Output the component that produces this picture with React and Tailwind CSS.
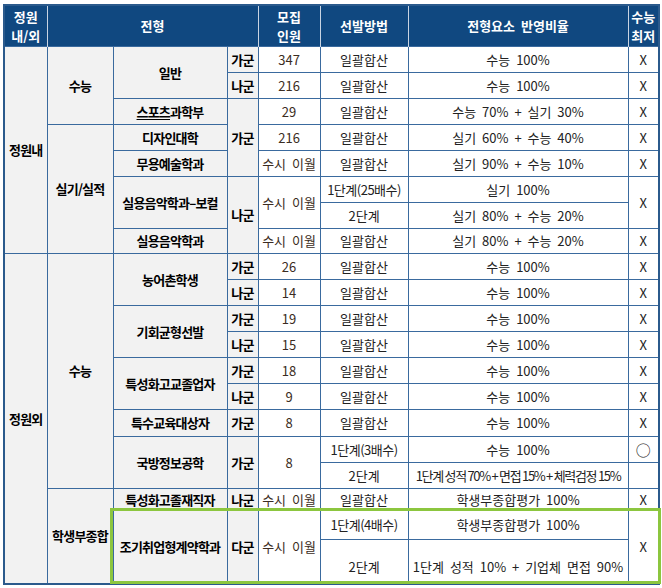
import React from "react";

const B = "border border-[#3a6a9e]";
const G = `${B} bg-[#f2f2f2] font-bold text-black tracking-[-0.8px]`;
const W = `${B} bg-white text-[#222]`;
const N = `${B} bg-white text-[#3b2c22]`;

function H({ children, ...p }) {
  return (
    <th
      {...p}
      className="border-x border-[#c9d4e2] bg-[#104880] text-white font-bold text-[13px] leading-[19px] text-center align-middle first:border-l-0 last:border-r-0"
    >
      {children}
    </th>
  );
}

function C({ cls, children, ...p }) {
  return (
    <td {...p} className={`${cls} text-center align-middle p-0 whitespace-nowrap`}>
      {children}
    </td>
  );
}

const sp = "[word-spacing:3px]";

export default function App() {
  return (
    <div className="w-[662px] h-[588px] bg-white pl-[3px] pt-[4px]" style={{ fontFamily: '"Noto Sans CJK KR", "Noto Sans", sans-serif' }}>
      <div className="relative w-[655px]">
        <table className="table-fixed border-collapse w-[655px] text-[13px] leading-none border-2 border-[#2b5a8c]">
          <colgroup>
            <col className="w-[43px]" />
            <col className="w-[66px]" />
            <col className="w-[114px]" />
            <col className="w-[31px]" />
            <col className="w-[62px]" />
            <col className="w-[88px]" />
            <col className="w-[220px]" />
            <col className="w-[31px]" />
          </colgroup>
          <thead>
            <tr className="h-[41px]">
              <H>정원<br />내/외</H>
              <H colSpan={3}>전형</H>
              <H>모집<br />인원</H>
              <H>선발방법</H>
              <H><span className={sp}>전형요소 반영비율</span></H>
              <H>수능<br />최저</H>
            </tr>
          </thead>
          <tbody>
            <tr className="h-[26px]">
              <C cls={G} rowSpan={8}>정원내</C>
              <C cls={G} rowSpan={3}>수능</C>
              <C cls={G} rowSpan={2}>일반</C>
              <C cls={G}>가군</C>
              <C cls={N}>347</C>
              <C cls={W}>일괄합산</C>
              <C cls={W}><span className={sp}>수능 100%</span></C>
              <C cls={W}>X</C>
            </tr>
            <tr className="h-[26px]">
              <C cls={G}>나군</C>
              <C cls={N}>216</C>
              <C cls={W}>일괄합산</C>
              <C cls={W}><span className={sp}>수능 100%</span></C>
              <C cls={W}>X</C>
            </tr>
            <tr className="h-[26px]">
              <C cls={G}><span className="underline underline-offset-2">스포츠</span>과학부</C>
              <C cls={G} rowSpan={3}>가군</C>
              <C cls={N}>29</C>
              <C cls={W}>일괄합산</C>
              <C cls={W}><span className={sp}>수능 70% + 실기 30%</span></C>
              <C cls={W}>X</C>
            </tr>
            <tr className="h-[26px]">
              <C cls={G} rowSpan={5}>실기/실적</C>
              <C cls={G}>디자인대학</C>
              <C cls={N}>216</C>
              <C cls={W}>일괄합산</C>
              <C cls={W}><span className={sp}>실기 60% + 수능 40%</span></C>
              <C cls={W}>X</C>
            </tr>
            <tr className="h-[26px]">
              <C cls={G}>무용예술학과</C>
              <C cls={N}><span className={sp}>수시 이월</span></C>
              <C cls={W}>일괄합산</C>
              <C cls={W}><span className={sp}>실기 90% + 수능 10%</span></C>
              <C cls={W}>X</C>
            </tr>
            <tr className="h-[26px]">
              <C cls={G} rowSpan={2}>실용음악학과–보컬</C>
              <C cls={G} rowSpan={3}>나군</C>
              <C cls={N} rowSpan={2}><span className={sp}>수시 이월</span></C>
              <C cls={W}><span className="tracking-[-0.5px]">1단계(25배수)</span></C>
              <C cls={W}><span className={sp}>실기 100%</span></C>
              <C cls={W} rowSpan={2}>X</C>
            </tr>
            <tr className="h-[26px]">
              <C cls={W}>2단계</C>
              <C cls={W}><span className={sp}>실기 80% + 수능 20%</span></C>
            </tr>
            <tr className="h-[25px]">
              <C cls={G}>실용음악학과</C>
              <C cls={N}><span className={sp}>수시 이월</span></C>
              <C cls={W}>일괄합산</C>
              <C cls={W}><span className={sp}>실기 80% + 수능 20%</span></C>
              <C cls={W}>X</C>
            </tr>
            <tr className="h-[26px]">
              <C cls={G} rowSpan={12}>정원외</C>
              <C cls={G} rowSpan={9}>수능</C>
              <C cls={G} rowSpan={2}>농어촌학생</C>
              <C cls={G}>가군</C>
              <C cls={N}>26</C>
              <C cls={W}>일괄합산</C>
              <C cls={W}><span className={sp}>수능 100%</span></C>
              <C cls={W}>X</C>
            </tr>
            <tr className="h-[26px]">
              <C cls={G}>나군</C>
              <C cls={N}>14</C>
              <C cls={W}>일괄합산</C>
              <C cls={W}><span className={sp}>수능 100%</span></C>
              <C cls={W}>X</C>
            </tr>
            <tr className="h-[26px]">
              <C cls={G} rowSpan={2}>기회균형선발</C>
              <C cls={G}>가군</C>
              <C cls={N}>19</C>
              <C cls={W}>일괄합산</C>
              <C cls={W}><span className={sp}>수능 100%</span></C>
              <C cls={W}>X</C>
            </tr>
            <tr className="h-[26px]">
              <C cls={G}>나군</C>
              <C cls={N}>15</C>
              <C cls={W}>일괄합산</C>
              <C cls={W}><span className={sp}>수능 100%</span></C>
              <C cls={W}>X</C>
            </tr>
            <tr className="h-[26px]">
              <C cls={G} rowSpan={2}>특성화고교졸업자</C>
              <C cls={G}>가군</C>
              <C cls={N}>18</C>
              <C cls={W}>일괄합산</C>
              <C cls={W}><span className={sp}>수능 100%</span></C>
              <C cls={W}>X</C>
            </tr>
            <tr className="h-[26px]">
              <C cls={G}>나군</C>
              <C cls={N}>9</C>
              <C cls={W}>일괄합산</C>
              <C cls={W}><span className={sp}>수능 100%</span></C>
              <C cls={W}>X</C>
            </tr>
            <tr className="h-[27px]">
              <C cls={G}>특수교육대상자</C>
              <C cls={G}>가군</C>
              <C cls={N}>8</C>
              <C cls={W}>일괄합산</C>
              <C cls={W}><span className={sp}>수능 100%</span></C>
              <C cls={W}>X</C>
            </tr>
            <tr className="h-[26px]">
              <C cls={G} rowSpan={2}>국방정보공학</C>
              <C cls={G} rowSpan={2}>가군</C>
              <C cls={N} rowSpan={2}>8</C>
              <C cls={W}><span className="tracking-[-0.5px]">1단계(3배수)</span></C>
              <C cls={W}><span className={sp}>수능 100%</span></C>
              <C cls={W}><span className="text-[15px]">○</span></C>
            </tr>
            <tr className="h-[26px]">
              <C cls={W}>2단계</C>
              <C cls={W}><span className="tracking-[-1.3px]">1단계 성적 70% + 면접 15% + 체력검정 15%</span></C>
              <C cls={W}></C>
            </tr>
            <tr className="h-[22px]">
              <C cls={G} rowSpan={3}>학생부종합</C>
              <C cls={G}>특성화고졸재직자</C>
              <C cls={G}>나군</C>
              <C cls={N}><span className={sp}>수시 이월</span></C>
              <C cls={W}>일괄합산</C>
              <C cls={W}><span className={sp}>학생부종합평가 100%</span></C>
              <C cls={W}>X</C>
            </tr>
            <tr className="h-[29px]">
              <C cls={G} rowSpan={2}>조기취업형계약학과</C>
              <C cls={G} rowSpan={2}>다군</C>
              <C cls={N} rowSpan={2}><span className={sp}>수시 이월</span></C>
              <C cls={W}><span className="tracking-[-0.5px]">1단계(4배수)</span></C>
              <C cls={W}><span className={sp}>학생부종합평가 100%</span></C>
              <C cls={W} rowSpan={2}>X</C>
            </tr>
            <tr className="h-[45px]">
              <C cls={W}><span className="relative top-[5px]">2단계</span></C>
              <C cls={W}><span className={`relative top-[5px] ${sp}`}>1단계 성적 10% + 기업체 면접 90%</span></C>
            </tr>
          </tbody>
        </table>
        <div className="absolute left-[107px] top-[504px] w-[551px] h-[76px] border-[3px] border-[#8cc63f] pointer-events-none" />
      </div>
    </div>
  );
}
